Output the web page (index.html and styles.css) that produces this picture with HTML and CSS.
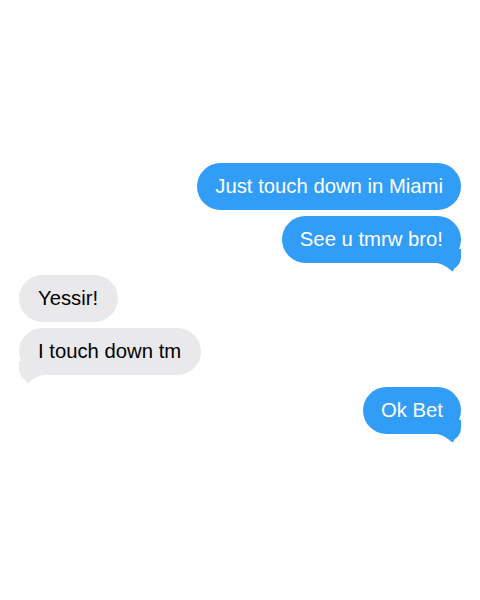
FILE: index.html
```html
<!DOCTYPE html>
<html>
<head>
<meta charset="utf-8">
<link rel="stylesheet" href="styles.css">
</head>
<body>
<div class="chat">
  <div class="group sent">
    <div class="bubble">Just touch down in Miami</div>
    <div class="bubble tail">See u tmrw bro!<svg class="tail-svg" viewBox="0 0 26 24" width="26" height="24"><path d="M0 0 H24 V7 C24 13 21.5 16.5 18.5 18.5 C17.2 19.4 16.6 21 16 22.6 C12.5 21 8.5 15.5 0 14 Z"/></svg></div>
  </div>
  <div class="group received">
    <div class="bubble">Yessir!</div>
    <div class="bubble tail">I touch down tm<svg class="tail-svg" viewBox="0 0 26 24" width="26" height="24"><path d="M0 0 H24 V7 C24 13 21.5 16.5 18.5 18.5 C17.2 19.4 16.6 21 16 22.6 C12.5 21 8.5 15.5 0 14 Z"/></svg></div>
  </div>
  <div class="group sent">
    <div class="bubble tail">Ok Bet<svg class="tail-svg" viewBox="0 0 26 24" width="26" height="24"><path d="M0 0 H24 V7 C24 13 21.5 16.5 18.5 18.5 C17.2 19.4 16.6 21 16 22.6 C12.5 21 8.5 15.5 0 14 Z"/></svg></div>
  </div>
</div>
</body>
</html>
```
FILE: styles.css
```css
html, body {
  margin: 0;
  padding: 0;
  background: #ffffff;
}
body {
  width: 480px;
  height: 600px;
  font-family: "Liberation Sans", Arial, sans-serif;
}
.chat {
  padding: 163px 19px 0 19px;
  display: flex;
  flex-direction: column;
  gap: 12px;
}
.group {
  display: flex;
  flex-direction: column;
  gap: 6px;
}
.sent {
  align-items: flex-end;
}
.received {
  align-items: flex-start;
}
.bubble {
  position: relative;
  font-size: 20.3px;
  line-height: 23px;
  padding: 12px 18px;
  border-radius: 24px;
  white-space: nowrap;
}
.sent .bubble {
  background: #319df6;
  color: #ffffff;
}
.received .bubble {
  background: #e9e9eb;
  color: #000000;
  padding: 12px 20px 12px 19px;
}
.tail-svg {
  position: absolute;
  bottom: -10px;
  right: -2px;
}
.sent .tail-svg {
  fill: #319df6;
}
.received .tail-svg {
  fill: #e9e9eb;
  right: auto;
  left: -2px;
  transform: scaleX(-1);
}
```
